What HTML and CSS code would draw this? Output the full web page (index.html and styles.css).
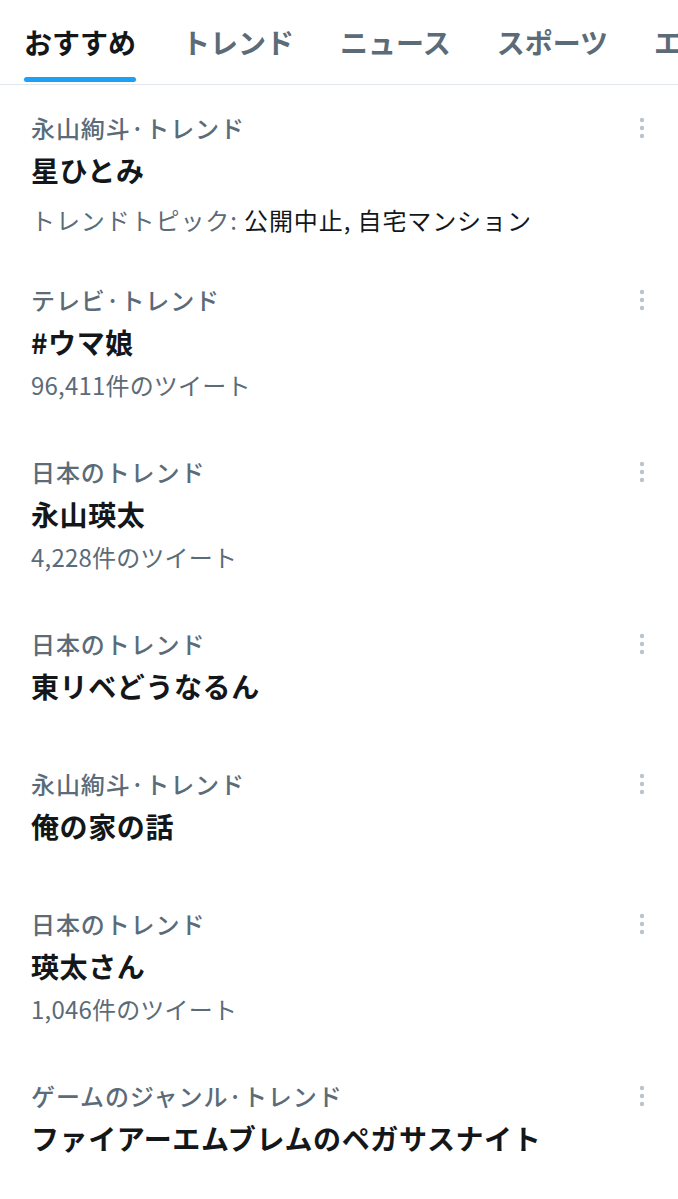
FILE: index.html
```html
<!DOCTYPE html>
<html lang="ja">
<head>
<meta charset="utf-8">
<title>トレンド</title>
<link rel="stylesheet" href="styles.css">
</head>
<body>
<nav class="tabs">
  <div class="tab tab--active"><span class="tab-label">おすすめ</span><span class="tab-indicator"></span></div>
  <div class="tab"><span class="tab-label">トレンド</span></div>
  <div class="tab"><span class="tab-label">ニュース</span></div>
  <div class="tab"><span class="tab-label">スポーツ</span></div>
  <div class="tab"><span class="tab-label">エンタメ</span></div>
</nav>
<main class="list">
  <article class="item item--topic">
    <div class="content">
      <div class="category">永山絢斗·トレンド</div>
      <div class="title">星ひとみ</div>
      <div class="topic"><span class="muted">トレンドトピック: </span>公開中止, 自宅マンション</div>
    </div>
    <svg class="more" viewBox="0 0 24 38" width="24" height="38"><circle cx="12" cy="11" r="2.2"/><circle cx="12" cy="19" r="2.2"/><circle cx="12" cy="27" r="2.2"/></svg>
  </article>
  <article class="item">
    <div class="content">
      <div class="category">テレビ·トレンド</div>
      <div class="title">#ウマ娘</div>
      <div class="count">96,411件のツイート</div>
    </div>
    <svg class="more" viewBox="0 0 24 38" width="24" height="38"><circle cx="12" cy="11" r="2.2"/><circle cx="12" cy="19" r="2.2"/><circle cx="12" cy="27" r="2.2"/></svg>
  </article>
  <article class="item">
    <div class="content">
      <div class="category">日本のトレンド</div>
      <div class="title">永山瑛太</div>
      <div class="count">4,228件のツイート</div>
    </div>
    <svg class="more" viewBox="0 0 24 38" width="24" height="38"><circle cx="12" cy="11" r="2.2"/><circle cx="12" cy="19" r="2.2"/><circle cx="12" cy="27" r="2.2"/></svg>
  </article>
  <article class="item">
    <div class="content">
      <div class="category">日本のトレンド</div>
      <div class="title">東リベどうなるん</div>
    </div>
    <svg class="more" viewBox="0 0 24 38" width="24" height="38"><circle cx="12" cy="11" r="2.2"/><circle cx="12" cy="19" r="2.2"/><circle cx="12" cy="27" r="2.2"/></svg>
  </article>
  <article class="item">
    <div class="content">
      <div class="category">永山絢斗·トレンド</div>
      <div class="title">俺の家の話</div>
    </div>
    <svg class="more" viewBox="0 0 24 38" width="24" height="38"><circle cx="12" cy="11" r="2.2"/><circle cx="12" cy="19" r="2.2"/><circle cx="12" cy="27" r="2.2"/></svg>
  </article>
  <article class="item">
    <div class="content">
      <div class="category">日本のトレンド</div>
      <div class="title">瑛太さん</div>
      <div class="count">1,046件のツイート</div>
    </div>
    <svg class="more" viewBox="0 0 24 38" width="24" height="38"><circle cx="12" cy="11" r="2.2"/><circle cx="12" cy="19" r="2.2"/><circle cx="12" cy="27" r="2.2"/></svg>
  </article>
  <article class="item">
    <div class="content">
      <div class="category">ゲームのジャンル·トレンド</div>
      <div class="title">ファイアーエムブレムのペガサスナイト</div>
    </div>
    <svg class="more" viewBox="0 0 24 38" width="24" height="38"><circle cx="12" cy="11" r="2.2"/><circle cx="12" cy="19" r="2.2"/><circle cx="12" cy="27" r="2.2"/></svg>
  </article>
</main>
</body>
</html>
```
FILE: styles.css
```css
html, body {
  margin: 0;
  padding: 0;
  background: #ffffff;
}
body {
  width: 678px;
  overflow: hidden;
  font-family: "Noto Sans CJK JP", "Noto Sans", sans-serif;
  color: #14171a;
}
.tabs {
  display: flex;
  gap: 46px;
  height: 84px;
  padding-left: 24px;
  border-bottom: 1px solid #e3e8ec;
  overflow: hidden;
  white-space: nowrap;
}
.tab {
  display: flex;
  flex-direction: column;
  align-items: stretch;
  padding-top: 22px;
  flex: none;
}
.tab-label {
  font-size: 28px;
  line-height: 40px;
  font-weight: 700;
  color: #5b6b78;
}
.tab--active .tab-label {
  color: #14171a;
}
.tab-indicator {
  margin-top: 15px;
  height: 5px;
  border-radius: 3px;
  background: #1da1f2;
}
.item {
  display: flex;
  align-items: flex-start;
  padding: 24px 24px 26px 31px;
}
.item--topic {
  padding-bottom: 19px;
}
.content {
  flex: 1;
  min-width: 0;
}
.category {
  font-size: 24px;
  line-height: 38px;
  font-weight: 500;
  letter-spacing: 0.9px;
  color: #5b6b78;
}
.title {
  font-size: 28px;
  line-height: 46px;
  padding-bottom: 6px;
  font-weight: 700;
  letter-spacing: 0.6px;
  color: #14171a;
}
.count {
  font-size: 24px;
  line-height: 28px;
  padding-bottom: 4px;
  letter-spacing: 0.2px;
  color: #5b6b78;
}
.topic {
  font-size: 24px;
  line-height: 28px;
  padding-bottom: 4px;
  letter-spacing: 0.9px;
  margin-top: 7px;
  color: #14171a;
}
.muted {
  color: #5b6b78;
}
.more {
  flex: none;
  fill: #b9c4cc;
}
```
